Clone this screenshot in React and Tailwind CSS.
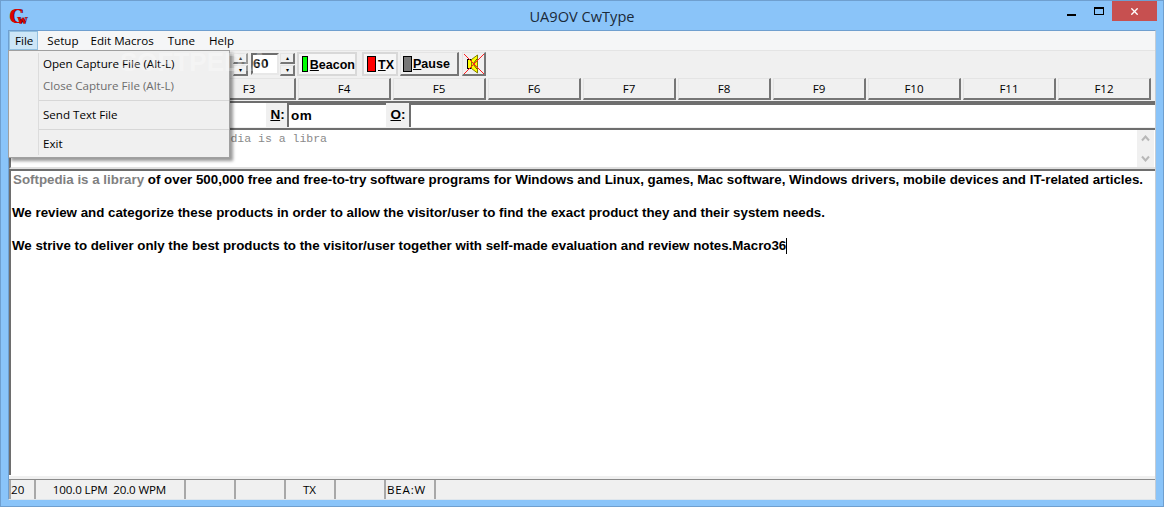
import { X } from "lucide-react";

const fkeys = ["F1", "F2", "F3", "F4", "F5", "F6", "F7", "F8", "F9", "F10", "F11", "F12"];
const panels = [
  { w: "w-[24px]", text: "20", cls: "" },
  { w: "w-[149px]", text: "100.0 LPM  20.0 WPM", cls: "justify-center tracking-[-0.15px]" },
  { w: "w-[49px]", text: "" },
  { w: "w-[49px]", text: "" },
  { w: "w-[49px]", text: "TX", cls: "justify-center" },
  { w: "w-[49px]", text: "" },
  { w: "w-[49px]", text: "BEA:W", cls: "pl-[1px] tracking-[0.8px]" },
  { w: "flex-1", text: "" },
];

const raised = "border border-t-[#e4e4e4] border-l-[#e4e4e4] border-r-[#767676] border-b-[#767676] border-r-2 border-b-2 bg-[#f0f0f0]";
const sunken = "border-2 border-t-[#6e6e6e] border-l-[#6e6e6e] border-r-[#e8e8e8] border-b-[#e8e8e8] bg-white";

function Spinner() {
  return (
    <div className="flex flex-col gap-[1px] w-[15px] h-[23px]">
      <div className={`${raised} flex-1 flex items-center justify-center text-[6px] leading-none text-black`}>▴</div>
      <div className={`${raised} flex-1 flex items-center justify-center text-[6px] leading-none text-black`}>▾</div>
    </div>
  );
}

function Lamp({ color }) {
  return <span className={`w-[9px] h-[16px] border border-black ${color}`} />;
}

function Toolbar() {
  return (
    <div className="h-[27px] shrink-0 bg-[#f0f0f0] flex items-center pl-[224px] border-t border-[#e4e4e4]">
      <Spinner />
      <div className={`${sunken} ml-[3px] w-[28px] h-[22px] flex items-center text-[13.5px] font-bold tracking-[0.4px] font-['Liberation_Sans',sans-serif] leading-none`}>60</div>
      <div className="ml-[1px]"><Spinner /></div>
      <div className="ml-[2px] w-[60px] h-[24px] border-2 border-[#d8d8d8] bg-[#f6f6f6] flex items-center pl-[3px] gap-[2px] font-['Liberation_Sans',sans-serif] font-bold text-[12.5px]">
        <Lamp color="bg-[#00ff00]" />
        <span className="pt-[2px]"><u>B</u>eacon</span>
      </div>
      <div className="ml-[5px] w-[36px] h-[24px] border-2 border-[#d8d8d8] bg-[#f6f6f6] flex items-center pl-[3px] gap-[2px] font-['Liberation_Sans',sans-serif] font-bold text-[12.5px]">
        <Lamp color="bg-[#ff0000]" />
        <span className="pt-[2px]"><u>T</u>X</span>
      </div>
      <div className={`${raised} ml-[2px] w-[59px] h-[24px] flex items-center pl-[2px] gap-[1px] font-['Liberation_Sans',sans-serif] font-bold text-[12.5px]`}>
        <Lamp color="bg-[#777777]" />
        <span className="pt-[1px]"><u>P</u>ause</span>
      </div>
      <div className={`${raised} ml-[3px] w-[24px] h-[24px] flex items-center justify-center`}>
        <svg width="20" height="20" viewBox="0 0 20 20" className="shrink-0">
          <rect x="3.500" y="5.500" width="4" height="9" fill="#ffff00" stroke="#000" />
          <path d="M7.500 5.500L13.500 1v18l-6-4.500z" fill="#ffff00" stroke="#808000" />
          <path d="M13 5l-4 5 4 5" fill="none" stroke="#000" strokeWidth="0.7" />
          <path d="M0 0l20 20M20 0L0 20" stroke="#ff2020" strokeWidth="1" fill="none" />
        </svg>
      </div>
    </div>
  );
}

function FKeys() {
  return (
    <div className="h-[26px] shrink-0 bg-[#f0f0f0] flex items-start pl-[4px] pt-[1px] gap-[2px] border-b-2 border-[#6e6e6e]">
      {fkeys.map((f) => (
        <div key={f} className={`${raised} w-[93px] h-[22px] flex items-center justify-center text-[11.6px] text-black`}>{f}</div>
      ))}
    </div>
  );
}

function Fields() {
  const field = "h-[24px] flex items-center pl-[2px] text-[13.5px] font-bold font-['Liberation_Sans',sans-serif] tracking-[0.4px] border-t-2 border-l-2 border-t-[#6e6e6e] border-l-[#6e6e6e] bg-white";
  const label = "h-[24px] flex items-center justify-center bg-[#f0f0f0] text-[13.5px] font-bold font-['Liberation_Sans',sans-serif]";
  return (
    <div className="h-[24px] shrink-0 flex bg-white">
      <div className="w-[257px] bg-white" />
      <div className={`${label} w-[21px] pl-[2px]`}><span><u>N</u>:</span></div>
      <div className={`${field} w-[99px]`}>om</div>
      <div className={`${label} w-[23px] pl-[1px]`}><span><u>O</u>:</span></div>
      <div className={`${field} flex-1`} />
    </div>
  );
}

function Capture() {
  return (
    <div className="h-[41px] shrink-0 flex bg-white border-t-2 border-t-[#6e6e6e] border-l-2 border-l-[#6e6e6e] border-b-2 border-b-[#e0e0e0] mt-[1px]">
      <div className="flex-1 pl-[178px] pt-[2px] text-[11.5px] leading-[14px] text-[#8a8a8a] font-['Liberation_Mono',monospace] whitespace-pre">Softpedia is a libra</div>
      <div className="w-[17px] bg-[#f0f0f0] flex flex-col items-center justify-between py-[5px] mr-[1px]">
        <svg width="9" height="7" viewBox="0 0 9 7"><path d="M1 5.500l3.500-4 3.500 4" fill="none" stroke="#b8b8b8" strokeWidth="2" /></svg>
        <svg width="9" height="7" viewBox="0 0 9 7"><path d="M1 1.500l3.500 4 3.500-4" fill="none" stroke="#b8b8b8" strokeWidth="2" /></svg>
      </div>
    </div>
  );
}

function MainText() {
  return (
    <div className="flex-1 min-h-0 bg-white border-t-2 border-t-[#6e6e6e] border-l-2 border-l-[#6e6e6e] pl-[1px] pt-[1px] font-['Liberation_Sans',sans-serif] font-bold text-[13.33px] leading-[16.500px] text-black whitespace-nowrap">
      <p className="pl-[1px]"><span className="text-[#808080]">Softpedia is a library</span> of over 500,000 free and free-to-try software programs for Windows and Linux, games, Mac software, Windows drivers, mobile devices and IT-related articles.</p>
      <p className="mt-[16.500px]">We review and categorize these products in order to allow the visitor/user to find the exact product they and their system needs.</p>
      <p className="mt-[16.500px] tracking-[-0.02px]">We strive to deliver only the best products to the visitor/user together with self-made evaluation and review notes.Macro36<span className="inline-block w-[1px] h-[16px] bg-black align-middle" /></p>
    </div>
  );
}

function FileMenu() {
  const item = "h-[22px] flex items-center pl-[34px] text-[11.6px]";
  return (
    <div className="absolute left-[-1px] top-[19px] w-[222px] h-[108px] bg-[#f0f0f0] border border-[#a0a0a0] shadow-[3px_3px_3px_rgba(0,0,0,0.4)] pt-[2px] z-10">
      <div className="absolute left-[29px] top-[2px] bottom-[2px] w-[1px] bg-[#dcdcdc]" />
      <div className={`${item} text-black`}>Open Capture File (Alt-L)</div>
      <div className={`${item} text-[#6d6d6d]`}>Close Capture File (Alt-L)</div>
      <div className="ml-[29px] my-[3px] h-[1px] bg-[#d7d7d7]" />
      <div className={`${item} text-black`}>Send Text File</div>
      <div className="ml-[29px] my-[3px] h-[1px] bg-[#d7d7d7]" />
      <div className={`${item} text-black`}>Exit</div>
    </div>
  );
}

export default function App() {
  return (
    <div className="w-[1164px] h-[507px] bg-[#8ac4f9] border border-[#6f9fcf] flex flex-col overflow-hidden font-['Open_Sans',sans-serif] text-black">
      <div className="h-[29px] flex items-start relative shrink-0">
        <div className="absolute left-[8px] top-[3px] w-[20px] h-[24px] font-['Liberation_Serif',serif] font-bold text-[#e00000] leading-none [text-shadow:1px_0_0_#300]">
          <span className="absolute left-0 top-[2px] text-[20px]">C</span>
          <span className="absolute left-[8px] top-[12px] text-[10px]">W</span>
        </div>
        <div className="flex-1 text-center text-[14.6px] leading-[30px] text-[#1a2a3a] pl-[106px]">UA9OV CwType</div>
        <div className="flex items-start pr-[6px]">
          <div className="w-[29px] h-[20px] flex items-end justify-center pb-[5px]"><span className="w-[9px] h-[2px] bg-black" /></div>
          <div className="w-[26px] h-[20px] flex items-center justify-center"><span className="w-[10px] h-[8px] border border-black border-t-2" /></div>
          <div className="w-[45px] h-[20px] bg-[#c75050] flex items-center justify-center"><X size={11} strokeWidth={3} className="text-white" /></div>
        </div>
      </div>
      <div className="relative flex-1 min-h-0 mx-[7px] mb-[6px] flex flex-col border border-[#6f9fcf] border-r-[#c4ccd4] border-b-[#dfe6ec] bg-[#f0f0f0]">
        <div className="h-[19px] bg-[#f5f6f7] flex items-center text-[11.6px] shrink-0">
          <div className="h-[19px] pl-[5px] pr-[4px] bg-[#cde6f7] border border-[#92c0e0] flex items-center">File</div>
          <div className="pl-[7px] pr-[6px] ml-[2px]">Setup</div>
          <div className="pl-[6px] pr-[7px]">Edit Macros</div>
          <div className="px-[7px]">Tune</div>
          <div className="px-[7px]">Help</div>
        </div>
        <Toolbar />
        <FKeys />
        <Fields />
        <Capture />
        <MainText />
        <div className="h-[24px] shrink-0 bg-[#f0f0f0] pt-[3px] border-t border-t-white">
          <div className="h-[20px] flex gap-[1px] border-t border-[#8a8a8a]">
            {panels.map((p, i) => (
              <div key={i} className={`${p.w} flex items-center whitespace-pre text-[11.6px] border-l-2 border-l-[#a8a8a8] ${p.cls}`}>{p.text}</div>
            ))}
          </div>
        </div>
        <FileMenu />
        <div className="absolute left-[111px] top-[12px] text-[26px] font-bold text-white/30 z-20 font-['Liberation_Sans',sans-serif]">SOFTPEDIA</div>
      </div>
    </div>
  );
}
